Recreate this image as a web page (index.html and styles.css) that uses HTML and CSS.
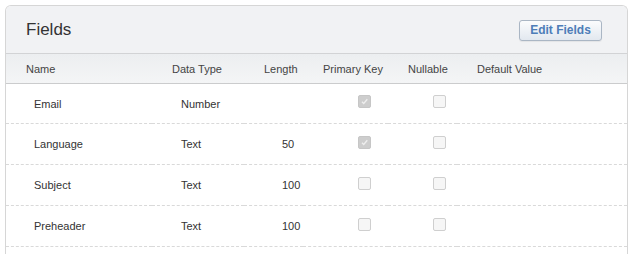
FILE: index.html
```html
<!DOCTYPE html>
<html>

<head>
    <meta charset="UTF-8" />
    <meta name="viewport" content="width=device-width, initial-scale=1" />
    <link rel="stylesheet" href="styles.css">
</head>

<body>
    <section class="panel">
        <header class="panel-head">
            <h2>Fields</h2>
            <button class="edit-btn">Edit Fields</button>
        </header>
        <table class="fields">
            <colgroup>
                <col class="c-name">
                <col class="c-type">
                <col class="c-len">
                <col class="c-pk">
                <col class="c-null">
                <col>
            </colgroup>
            <thead>
                <tr>
                    <th>Name</th>
                    <th>Data Type</th>
                    <th>Length</th>
                    <th>Primary Key</th>
                    <th>Nullable</th>
                    <th>Default Value</th>
                </tr>
            </thead>
            <tbody>
                <tr>
                    <td class="name">Email</td>
                    <td class="type">Number</td>
                    <td class="len"></td>
                    <td class="pk"><span class="check on"><svg viewBox="0 0 13 13"><path d="M3.5 6.8 L5.6 8.9 L9.8 3.9" /></svg></span></td>
                    <td class="nul"><span class="check"></span></td>
                    <td></td>
                </tr>
                <tr>
                    <td class="name">Language</td>
                    <td class="type">Text</td>
                    <td class="len">50</td>
                    <td class="pk"><span class="check on"><svg viewBox="0 0 13 13"><path d="M3.5 6.8 L5.6 8.9 L9.8 3.9" /></svg></span></td>
                    <td class="nul"><span class="check"></span></td>
                    <td></td>
                </tr>
                <tr>
                    <td class="name">Subject</td>
                    <td class="type">Text</td>
                    <td class="len">100</td>
                    <td class="pk"><span class="check"></span></td>
                    <td class="nul"><span class="check"></span></td>
                    <td></td>
                </tr>
                <tr>
                    <td class="name">Preheader</td>
                    <td class="type">Text</td>
                    <td class="len">100</td>
                    <td class="pk"><span class="check"></span></td>
                    <td class="nul"><span class="check"></span></td>
                    <td></td>
                </tr>
            </tbody>
        </table>
    </section>
</body>

</html>
```

FILE: styles.css
```css
body {
    margin: 0;
    padding: 0;
    background-color: #fff;
    font-family: "Liberation Sans", Arial, Helvetica, sans-serif;
    color: #333;
}

.panel {
    margin: 5px 0 0 5px;
    width: 621px;
    height: 260px;
    border: 1px solid #d6d6d6;
    border-bottom: none;
    border-radius: 6px 6px 0 0;
    overflow: hidden;
}

.panel-head {
    display: flex;
    align-items: center;
    justify-content: space-between;
    height: 47px;
    padding: 0 25px 0 20px;
    background-color: #f1f2f4;
    border-bottom: 1px solid #d2d3d5;
}

.panel-head h2 {
    margin: 0;
    font-size: 17px;
    font-weight: normal;
    color: #333;
}

.edit-btn {
    width: 83px;
    height: 21px;
    margin-top: 1px;
    padding: 0;
    font-family: inherit;
    font-size: 12px;
    font-weight: bold;
    color: #4d7db8;
    background: linear-gradient(#fbfcfd, #e2e8ef);
    border: 1px solid #aab6c4;
    border-radius: 3px;
    box-shadow: 0 1px 1px rgba(0, 0, 0, 0.06);
}

.fields {
    width: 100%;
    border-collapse: collapse;
    table-layout: fixed;
    font-size: 11px;
}

.c-name {
    width: 146px;
}

.c-type {
    width: 92px;
}

.c-len {
    width: 59px;
}

.c-pk {
    width: 85px;
}

.c-null {
    width: 69px;
}

.fields th {
    height: 29px;
    padding: 0 0 0 20px;
    text-align: left;
    font-weight: normal;
    color: #444;
    background: linear-gradient(#eceef0, #f4f5f6);
    border-bottom: 1px solid #cbcccd;
    white-space: nowrap;
}

.fields td {
    height: 40px;
    padding: 0;
    border-bottom: 1px dashed #d9d9d9;
    color: #333;
}

.fields tbody tr:first-child td {
    height: 39px;
}

.fields td.name {
    padding-left: 28px;
}

.fields td.type {
    padding-left: 29px;
}

.fields td.len {
    padding-left: 38px;
}

.fields td.pk {
    padding-left: 55px;
}

.fields td.nul {
    padding-left: 45px;
}

.check {
    display: block;
    width: 11px;
    height: 11px;
    margin-bottom: 4px;
    border: 1px solid #cfcfcf;
    border-radius: 2px;
    background-color: #f6f6f6;
}

.check.on {
    background-color: #cdcdcd;
    border-color: #c6c6c6;
}

.check svg {
    display: block;
    width: 11px;
    height: 11px;
    fill: none;
    stroke: #eee;
    stroke-width: 1.6;
}
```
